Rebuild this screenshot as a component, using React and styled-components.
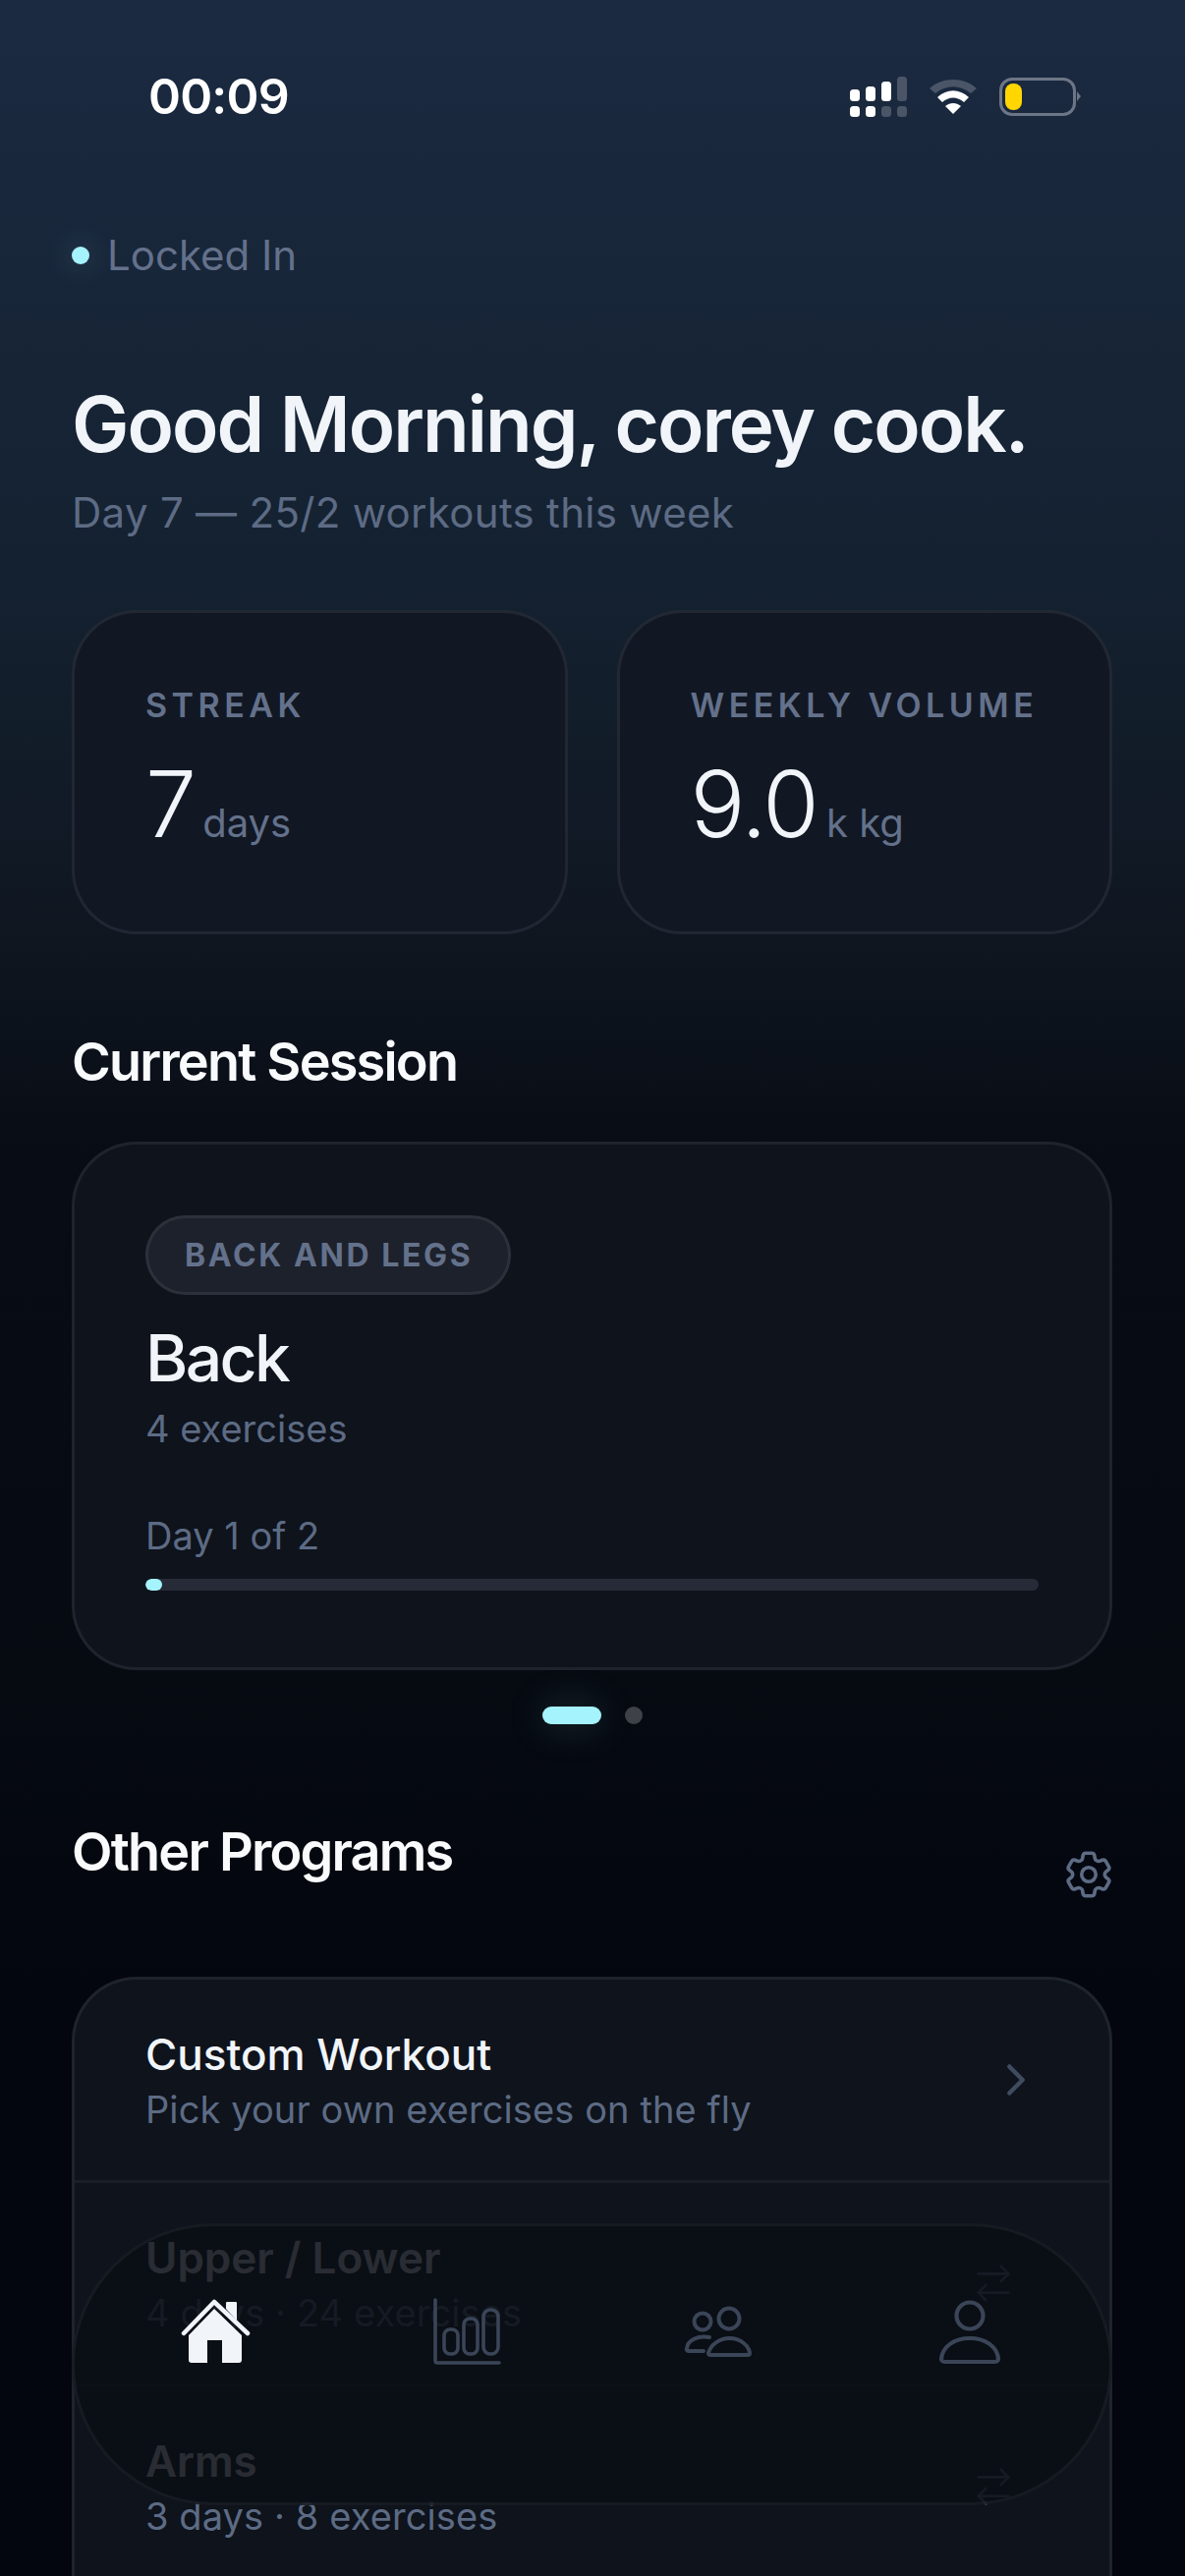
import React from 'react';
import styled, { createGlobalStyle } from 'styled-components';
import { ArrowRightLeft, ChevronRight } from 'lucide-react';
import { HiOutlineCog6Tooth } from 'react-icons/hi2';

const GlobalStyle = createGlobalStyle`
  html, body { margin: 0; padding: 0; background: #03060e; }
  * { box-sizing: border-box; }
`;

const Screen = styled.div`
  position: relative;
  width: 1206px;
  height: 2622px;
  overflow: hidden;
  padding: 0 74px 0 73px;
  font-family: Inter, "Noto Sans", sans-serif;
  background: linear-gradient(180deg, #1b2a41 0, #142130 600px, #0f1620 960px, #080c15 1170px, #060a11 1700px, #03060e 2020px, #03060e 100%);
`;

const StatusBar = styled.div`
  display: flex;
  align-items: center;
  justify-content: space-between;
  height: 42px;
  margin-top: 77px;
  padding: 0 37px 0 78px;
`;

const Clock = styled.span`
  font-size: 50px;
  font-weight: 600;
  line-height: 42px;
  letter-spacing: -0.8px;
  color: #fff;
`;

const StatusIcons = styled.div`
  display: flex;
  align-items: center;
  gap: 21px;
`;

const Battery = styled.div`
  position: relative;
  width: 78px;
  height: 39px;
  padding: 3px;
  border: 3px solid #6d7686;
  border-radius: 13px;
  &::after {
    content: '';
    position: absolute;
    right: -8px;
    top: 11px;
    border-left: 4px solid #6d7686;
    border-top: 5px solid transparent;
    border-bottom: 5px solid transparent;
  }
`;

const BatteryLevel = styled.div`
  width: 17px;
  height: 27px;
  border-radius: 8px;
  background: #ffd600;
`;

const Presence = styled.div`
  display: flex;
  align-items: center;
  gap: 18px;
  margin-top: 117px;
  font-size: 42px;
  line-height: 48px;
  color: #64718b;
`;

const PresenceDot = styled.span`
  width: 18px;
  height: 18px;
  border-radius: 50%;
  background: #a5f3fc;
  box-shadow: 0 0 30px rgba(165, 243, 252, 0.28);
`;

const Greeting = styled.h1`
  margin: 102px 0 0;
  font-size: 78px;
  line-height: 92px;
  font-weight: 600;
  letter-spacing: -2px;
  color: #f1f5f9;
  white-space: nowrap;
`;

const Subtitle = styled.p`
  margin: 19px 0 0;
  font-size: 42px;
  line-height: 50px;
  letter-spacing: 0.3px;
  color: #5d6b84;
`;

const Stats = styled.div`
  display: grid;
  grid-template-columns: minmax(0, 1fr) minmax(0, 1fr);
  gap: 50px;
  margin-top: 74px;
`;

const Panel = styled.section`
  border: 3px solid rgba(255, 255, 255, 0.07);
  border-radius: 66px;
  background: rgba(17, 24, 36, 0.92);
`;

const StatCard = styled(Panel)`
  height: 330px;
  padding: 72px 72px 0;
`;

const StatLabel = styled.div`
  font-size: 34px;
  line-height: 44px;
  font-weight: 600;
  letter-spacing: 4.5px;
  color: #64718b;
  white-space: nowrap;
`;

const StatValue = styled.div`
  display: flex;
  align-items: baseline;
  gap: ${(p) => p.$gap}px;
  margin-top: 28px;
`;

const Figure = styled.span`
  font-size: 93px;
  line-height: 100px;
  font-weight: 300;
  letter-spacing: -1.8px;
  color: #f1f5f9;
`;

const Unit = styled.span`
  font-size: 40px;
  color: #64718b;
`;

const SectionTitle = styled.h2`
  margin: ${(p) => p.$top}px 0 0;
  font-size: 54px;
  line-height: 64px;
  font-weight: 600;
  letter-spacing: -1.8px;
  color: #f8fafc;
`;

const SessionCard = styled(Panel)`
  height: 538px;
  margin-top: 49px;
  padding: 72px 72px 0;
  background: #0e131c;
`;

const Pill = styled.span`
  display: inline-block;
  height: 81px;
  padding: 0 36px 0 37px;
  border: 3px solid rgba(255, 255, 255, 0.07);
  border-radius: 41px;
  background: #1c212c;
  font-size: 32px;
  line-height: 75px;
  font-weight: 700;
  letter-spacing: 2.6px;
  color: #64718b;
`;

const SessionName = styled.div`
  margin-top: 24px;
  font-size: 66px;
  line-height: 80px;
  font-weight: 500;
  letter-spacing: -2.6px;
  color: #f1f5f9;
`;

const SessionMeta = styled.div`
  margin-top: 9px;
  font-size: 38px;
  line-height: 46px;
  color: #5d6b84;
`;

const DayLabel = styled(SessionMeta)`
  margin-top: 63px;
`;

const Track = styled.div`
  height: 12px;
  margin-top: 21px;
  border-radius: 6px;
  background: #272b38;
  overflow: hidden;
`;

const TrackFill = styled.div`
  height: 100%;
  border-radius: 6px;
  background: #a5f3fc;
`;

const Pager = styled.div`
  display: flex;
  justify-content: center;
  gap: 24px;
  margin-top: 37px;
`;

const PagerDot = styled.span`
  width: ${(p) => (p.$active ? 60 : 18)}px;
  height: 18px;
  border-radius: 9px;
  background: ${(p) => (p.$active ? '#a5f3fc' : '#3e4248')};
  box-shadow: ${(p) => (p.$active ? '0 0 40px rgba(165, 243, 252, 0.22)' : 'none')};
`;

const SectionHead = styled.div`
  display: flex;
  justify-content: space-between;
  align-items: flex-start;
  margin-top: 98px;
`;

const GearButton = styled.span`
  display: flex;
  margin: 26px -5px 0 0;
  color: #5d6b84;
`;

const ProgramList = styled(Panel)`
  margin-top: 75px;
  background: #0e131c;
  height: 900px;
`;

const ProgramRow = styled.div`
  display: flex;
  align-items: center;
  justify-content: space-between;
  height: 207px;
  padding: 0 68px 0 72px;
  border-bottom: 3px solid rgba(255, 255, 255, 0.05);
`;

const ProgramTitle = styled.div`
  font-size: 44px;
  line-height: 54px;
  font-weight: ${(p) => (p.$strong ? 600 : 500)};
  color: #f1f5f9;
`;

const ProgramMeta = styled.div`
  margin-top: 6px;
  font-size: 38px;
  line-height: 46px;
  letter-spacing: 0.1px;
  color: #5d6b84;
`;

const RowIcon = styled.span`
  display: flex;
  margin-right: ${(p) => p.$inset || 0}px;
  color: ${(p) => p.$color};
`;

const TabBar = styled.nav`
  position: absolute;
  left: 73px;
  top: 2263px;
  width: 1059px;
  height: 287px;
  display: grid;
  grid-template-columns: repeat(4, 256px);
  padding: 71px 15px 0;
  border: 3px solid rgba(255, 255, 255, 0.05);
  border-radius: 144px;
  background: rgba(10, 14, 21, 0.87);
`;

const Tab = styled.span`
  display: flex;
  justify-content: center;
  align-items: flex-start;
  color: ${(p) => (p.$active ? '#f1f5f9' : '#3a4557')};
`;

const SignalIcon = () => (
  <svg width="58" height="41" viewBox="0 0 58 41">
    <g fill="#fff">
      <rect x="0" y="13" width="10" height="12" rx="3.5" />
      <rect x="16" y="10" width="10" height="15" rx="3.5" />
      <rect x="32" y="5" width="10" height="20" rx="3.5" />
      <rect x="0" y="30" width="10" height="11" rx="3.5" />
      <rect x="16" y="30" width="10" height="11" rx="3.5" />
    </g>
    <g fill="#4a5568">
      <rect x="48" y="0" width="10" height="25" rx="3.5" />
      <rect x="32" y="30" width="10" height="11" rx="3.5" />
      <rect x="48" y="30" width="10" height="11" rx="3.5" />
    </g>
  </svg>
);

const WifiIcon = () => (
  <svg width="52" height="38" viewBox="0 0 52 38">
    <path d="M2 11 C15 -1 37 -1 50 11 L44 16 C33 7 19 7 8 16 Z" fill="#4a5568" />
    <path d="M10 20 C20 11 32 11 42 20 L37 25 C30 19 22 19 15 25 Z" fill="#fff" />
    <path d="M18 29 C23 25 29 25 34 29 L26 37 Z" fill="#fff" />
  </svg>
);

const HomeIcon = () => (
  <svg width="72" height="72" viewBox="0 0 72 72" fill="currentColor">
    <path d="M47 13 V7 a1 1 0 0 1 1-1 H57 a1 1 0 0 1 1 1 V25 Z" />
    <path d="M35 13 L63 40 V65 a3 3 0 0 1 -3 3 H43 V45 H28 V68 H12 a3 3 0 0 1 -3-3 V40 Z" />
    <path d="M4 38 L35 6 L69 38" fill="none" stroke="currentColor" strokeWidth="4.5" strokeLinecap="round" strokeLinejoin="round" />
  </svg>
);

const ChartIcon = () => (
  <svg width="72" height="72" viewBox="0 0 72 72" fill="none" stroke="currentColor" strokeWidth="3.6" strokeLinecap="round" strokeLinejoin="round">
    <path d="M4 4 V66 a2 2 0 0 0 2 2 H69" />
    <rect x="13" y="34" width="14" height="25" rx="6" />
    <rect x="33" y="23" width="14" height="36" rx="6" />
    <rect x="53" y="14" width="15" height="45" rx="7" />
  </svg>
);

const TeamIcon = () => (
  <svg width="72" height="72" viewBox="0 0 72 72" fill="none" stroke="currentColor" strokeWidth="4" strokeLinecap="round" strokeLinejoin="round">
    <circle cx="20" cy="26" r="8.5" />
    <circle cx="47" cy="23" r="10.5" />
    <path d="M28 60 H66 a2 2 0 0 0 2-2 C67 50 58 43 47.5 43 C37 43 28 50 26 58 a2 2 0 0 0 2 2 Z" />
    <path d="M27 42 C15 40 5 45 4 53 a2 2 0 0 0 2 3 H21" />
  </svg>
);

const ProfileIcon = () => (
  <svg width="72" height="72" viewBox="0 0 72 72" fill="none" stroke="currentColor" strokeWidth="4.2" strokeLinecap="round" strokeLinejoin="round">
    <circle cx="36" cy="20" r="13.5" />
    <path d="M10 67 H62 a3 3 0 0 0 3-3 C64 51 51 43 36 43 C21 43 8 51 7 64 a3 3 0 0 0 3 3 Z" />
  </svg>
);

const programs = [
  { title: 'Upper / Lower', meta: '4 days · 24 exercises' },
  { title: 'Arms', meta: '3 days · 8 exercises' },
];

export default function App() {
  return (
    <Screen>
      <GlobalStyle />
      <StatusBar>
        <Clock>00:09</Clock>
        <StatusIcons>
          <SignalIcon />
          <WifiIcon />
          <Battery><BatteryLevel /></Battery>
        </StatusIcons>
      </StatusBar>

      <Presence><PresenceDot />Locked In</Presence>

      <Greeting>Good Morning, corey cook.</Greeting>
      <Subtitle>Day 7 — 25/2 workouts this week</Subtitle>

      <Stats>
        <StatCard>
          <StatLabel>STREAK</StatLabel>
          <StatValue $gap={8}><Figure>7</Figure><Unit>days</Unit></StatValue>
        </StatCard>
        <StatCard>
          <StatLabel>WEEKLY VOLUME</StatLabel>
          <StatValue $gap={9}><Figure>9.0</Figure><Unit>k kg</Unit></StatValue>
        </StatCard>
      </Stats>

      <SectionTitle $top={98}>Current Session</SectionTitle>
      <SessionCard>
        <Pill>BACK AND LEGS</Pill>
        <SessionName>Back</SessionName>
        <SessionMeta>4 exercises</SessionMeta>
        <DayLabel>Day 1 of 2</DayLabel>
        <Track><TrackFill style={{ width: '1.9%' }} /></Track>
      </SessionCard>

      <Pager><PagerDot $active /><PagerDot /></Pager>

      <SectionHead>
        <SectionTitle $top={0}>Other Programs</SectionTitle>
        <GearButton><HiOutlineCog6Tooth size={58} /></GearButton>
      </SectionHead>

      <ProgramList>
        <ProgramRow>
          <div>
            <ProgramTitle>Custom Workout</ProgramTitle>
            <ProgramMeta>Pick your own exercises on the fly</ProgramMeta>
          </div>
          <RowIcon $color="#3f4b5f"><ChevronRight size={54} strokeWidth={2} /></RowIcon>
        </ProgramRow>
        {programs.map((program) => (
          <ProgramRow key={program.title}>
            <div>
              <ProgramTitle $strong>{program.title}</ProgramTitle>
              <ProgramMeta>{program.meta}</ProgramMeta>
            </div>
            <RowIcon $color="#5d6b84" $inset={27}><ArrowRightLeft size={46} strokeWidth={1.4} /></RowIcon>
          </ProgramRow>
        ))}
      </ProgramList>

      <TabBar>
        <Tab $active><HomeIcon /></Tab>
        <Tab><ChartIcon /></Tab>
        <Tab><TeamIcon /></Tab>
        <Tab><ProfileIcon /></Tab>
      </TabBar>
    </Screen>
  );
}
